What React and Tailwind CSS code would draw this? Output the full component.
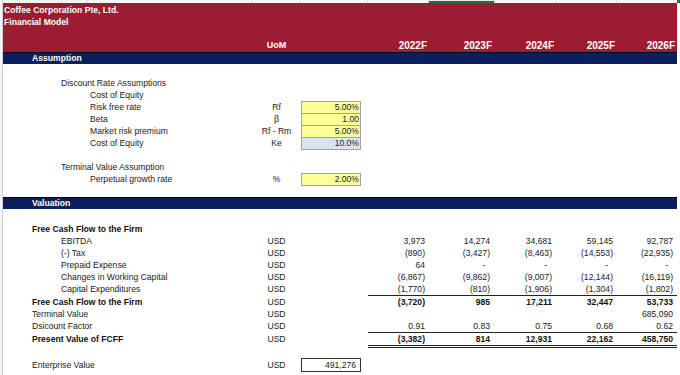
import React from "react";

const YW = ["w-[61px]", "w-[65px]", "w-[62px]", "w-[61px]", "w-[60px]"];
const PL = ["pl-[29px]", "pl-[58px]", "pl-[87px]"];

function Years({ values = [], bold, className = "" }) {
  return (
    <div className={"flex w-[309px] " + className}>
      {YW.map((w, i) => {
        const v = values[i] ?? "";
        const dash = v === "-";
        return (
          <div
            key={i}
            className={
              w +
              " h-[12px] leading-[12px] text-right whitespace-nowrap " +
              (dash ? "pr-[9px] " : "pr-[4px] ") +
              (bold ? "font-bold text-[#111]" : "")
            }
          >
            {v}
          </div>
        );
      })}
    </div>
  );
}

function Label({ text, level = 0, bold, className = "" }) {
  return (
    <div
      className={
        "w-[249px] h-[12px] leading-[12px] whitespace-nowrap " +
        PL[level] +
        " " +
        (bold ? "font-bold text-[#111] " : "") +
        className
      }
    >
      {text}
    </div>
  );
}

function Uom({ text, className = "" }) {
  return (
    <div className={"w-[49px] h-[12px] leading-[12px] text-center whitespace-nowrap " + className}>
      {text}
    </div>
  );
}

function AssumpRow({ label, level, uom, box, boxBg }) {
  return (
    <div className="flex h-[12px] items-start">
      <Label text={label} level={level} />
      <Uom text={uom} />
      {box ? (
        <div
          className={
            "w-[60px] h-[13px] border border-[#a3a3a3] text-right pr-[1px] leading-[11px] relative " +
            boxBg
          }
        >
          {box}
        </div>
      ) : (
        <div className="w-[60px]" />
      )}
    </div>
  );
}

function ValRow({ label, level = 0, bold, uom = "USD", values, yClass = "", labelClass = "" }) {
  return (
    <div className="flex items-start">
      <Label text={label} level={level} bold={bold} className={labelClass} />
      <Uom text={uom} className={labelClass} />
      <div className="w-[60px]" />
      <div className="w-[7px]" />
      <Years values={values} bold={bold} className={yClass} />
    </div>
  );
}

function Bar({ title }) {
  return (
    <div className="h-[12px] bg-[#0b1f5c] border-t border-[#05081c] flex items-center">
      <div className="pl-[29px] text-white font-bold leading-[11px]">{title}</div>
    </div>
  );
}

export default function App() {
  return (
    <div className="w-[680px] h-[375px] overflow-hidden bg-white font-['Liberation_Sans',Arial,sans-serif] text-[8.6px] text-[#222]">
      {/* column header remnant */}
      <div className="flex h-[3px] bg-[#f6f6f6]">
        <div className="w-[3px] border-r border-[#d6d6d6]" />
        <div className="w-[27px] border-r border-[#dcdcdc]" />
        <div className="w-[29px] border-r border-[#dcdcdc]" />
        <div className="w-[29px] border-r border-[#dcdcdc]" />
        <div className="w-[164px] border-r border-[#dcdcdc]" />
        <div className="w-[49px] border-r border-[#dcdcdc]" />
        <div className="w-[67px] border-r border-[#dcdcdc]" />
        <div className="w-[61px] border-r border-[#dcdcdc]" />
        <div className="w-[65px] bg-[#e2e2e2] border-b-2 border-[#1f7244]" />
        <div className="w-[62px] border-x border-[#dcdcdc]" />
        <div className="w-[61px] border-r border-[#dcdcdc]" />
        <div className="w-[60px]" />
        <div className="w-[3px] bg-[#1f7244]" />
      </div>

      <div className="flex">
        <div className="w-[3px] h-[372px] border-r border-[#cfcfcf] bg-[#f6f6f6]" />
        <div className="w-[674px]">
          {/* red header */}
          <div className="h-[49px] bg-[#9c1c31] text-white font-bold flex flex-col">
            <div className="h-[12px] leading-[12px] pl-[1px] mt-[1px]">Coffee Corporation Pte, Ltd.</div>
            <div className="h-[12px] leading-[12px] pl-[1px]">Financial Model</div>
            <div className="flex-1" />
            <div className="flex h-[13px] items-center">
              <div className="w-[249px]" />
              <div className="w-[49px] text-center text-[9px]">UoM</div>
              <div className="w-[67px]" />
              {["2022F", "2023F", "2024F", "2025F", "2026F"].map((y, i) => (
                <div key={y} className={YW[i] + " text-right pr-[2px] text-[10px]"}>
                  {y}
                </div>
              ))}
            </div>
          </div>

          <Bar title="Assumption" />
          <div className="h-[13px]" />

          <AssumpRow label="Discount Rate Assumptions" level={1} />
          <AssumpRow label="Cost of Equity" level={2} />
          <AssumpRow label="Risk free rate" level={2} uom="Rf" box="5.00%" boxBg="bg-[#ffff99]" />
          <AssumpRow label="Beta" level={2} uom="β" box="1.00" boxBg="bg-[#ffff99]" />
          <AssumpRow label="Market risk premium" level={2} uom="Rf - Rm" box="5.00%" boxBg="bg-[#ffff99]" />
          <AssumpRow label="Cost of Equity" level={2} uom="Ke" box="10.0%" boxBg="bg-[#dce3f0]" />
          <div className="h-[12px]" />
          <AssumpRow label="Terminal Value Assumption" level={1} />
          <AssumpRow label="Perpetual growth rate" level={2} uom="%" box="2.00%" boxBg="bg-[#ffff99]" />

          <div className="h-[12px]" />
          <Bar title="Valuation" />
          <div className="h-[14px]" />

          <div className="flex">
            <Label text="Free Cash Flow to the Firm" level={0} bold />
          </div>
          <ValRow label="EBITDA" level={1} values={["3,973", "14,274", "34,681", "59,145", "92,787"]} />
          <ValRow label="(-) Tax" level={1} values={["(890)", "(3,427)", "(8,463)", "(14,553)", "(22,935)"]} />
          <ValRow label="Prepaid Expense" level={1} values={["64", "-", "-", "-", "-"]} />
          <ValRow
            label="Changes in Working Capital"
            level={1}
            values={["(6,867)", "(9,862)", "(9,007)", "(12,144)", "(16,119)"]}
          />
          <ValRow
            label="Capital Expenditures"
            level={1}
            values={["(1,770)", "(810)", "(1,906)", "(1,304)", "(1,802)"]}
            yClass="border-b border-[#222]"
          />
          <ValRow label="Free Cash Flow to the Firm" bold values={["(3,720)", "985", "17,211", "32,447", "53,733"]} />
          <ValRow label="Terminal Value" values={["", "", "", "", "685,090"]} />
          <ValRow label="Dsicount Factor" values={["0.91", "0.83", "0.75", "0.68", "0.62"]} />
          <ValRow
            label="Present Value of FCFF"
            bold
            values={["(3,382)", "814", "12,931", "22,162", "458,750"]}
            yClass="border-t border-b-[3px] border-double border-t-[#222] border-b-[#222]"
            labelClass="mt-[1px]"
          />
          <div className="h-[10px]" />
          <div className="flex items-center h-[14px]">
            <Label text="Enterprise Value" level={0} />
            <Uom text="USD" />
            <div className="w-[60px] h-[14px] border border-[#333] text-right pr-[4px] leading-[12px]">491,276</div>
          </div>
        </div>
      </div>
    </div>
  );
}
